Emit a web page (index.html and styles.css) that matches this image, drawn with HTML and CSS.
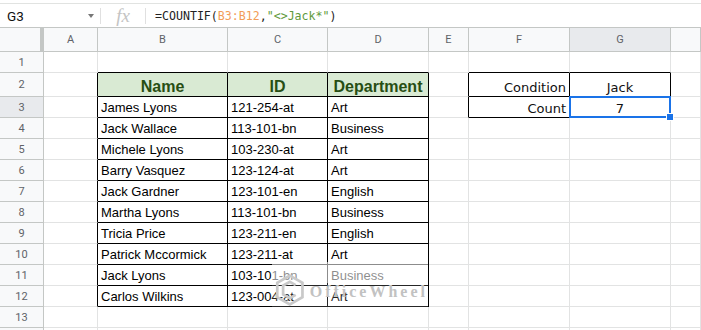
FILE: index.html
```html
<!DOCTYPE html>
<html lang="en">
<head>
  <meta charset="UTF-8" />
  <title>COUNTIF not equal</title>
  <link rel="stylesheet" href="styles.css">
</head>
<body>
  <div class="topline"></div>
  <!-- formula bar -->
  <div class="formula-bar">
    <div class="name-box"><span>G3</span><span class="caret"></span></div>
    <div class="sep"></div>
    <div class="fx">fx</div>
    <div class="sep"></div>
    <div class="formula">=COUNTIF(<span class="ref">B3:B12</span>,<span class="str">"&lt;&gt;Jack*"</span>)</div>
  </div>

  <div class="sheet-wrap">
    <div class="sheet">
      <!-- column headers -->
      <div class="corner"></div>
      <div class="col-head">A</div>
      <div class="col-head">B</div>
      <div class="col-head">C</div>
      <div class="col-head">D</div>
      <div class="col-head">E</div>
      <div class="col-head">F</div>
      <div class="col-head sel">G</div>
      <div class="col-head"></div>

      <div class="row-head">1</div>
      <div></div><div class="tb-top"></div><div class="tb-top"></div><div class="tb-top"></div>
      <div></div><div class="tb-top"></div><div class="tb-top"></div><div></div>

      <div class="row-head">2</div>
      <div class="tb-left"></div>
      <div class="tb hd">Name</div>
      <div class="tb hd">ID</div>
      <div class="tb hd">Department</div>
      <div class="tb-left"></div>
      <div class="tb dv r">Condition</div>
      <div class="tb dv c">Jack</div>
      <div></div>

      <div class="row-head sel">3</div>
      <div class="tb-left"></div>
      <div class="tb">James Lyons</div>
      <div class="tb">121-254-at</div>
      <div class="tb">Art</div>
      <div class="tb-left"></div>
      <div class="tb dv r">Count</div>
      <div class="tb dv c active">7</div>
      <div></div>

      <div class="row-head">4</div>
      <div class="tb-left"></div>
      <div class="tb">Jack Wallace</div>
      <div class="tb">113-101-bn</div>
      <div class="tb">Business</div>
      <div></div><div></div><div></div><div></div>

      <div class="row-head">5</div>
      <div class="tb-left"></div>
      <div class="tb">Michele Lyons</div>
      <div class="tb">103-230-at</div>
      <div class="tb">Art</div>
      <div></div><div></div><div></div><div></div>

      <div class="row-head">6</div>
      <div class="tb-left"></div>
      <div class="tb">Barry Vasquez</div>
      <div class="tb">123-124-at</div>
      <div class="tb">Art</div>
      <div></div><div></div><div></div><div></div>

      <div class="row-head">7</div>
      <div class="tb-left"></div>
      <div class="tb">Jack Gardner</div>
      <div class="tb">123-101-en</div>
      <div class="tb">English</div>
      <div></div><div></div><div></div><div></div>

      <div class="row-head">8</div>
      <div class="tb-left"></div>
      <div class="tb">Martha Lyons</div>
      <div class="tb">113-101-bn</div>
      <div class="tb">Business</div>
      <div></div><div></div><div></div><div></div>

      <div class="row-head">9</div>
      <div class="tb-left"></div>
      <div class="tb">Tricia Price</div>
      <div class="tb">123-211-en</div>
      <div class="tb">English</div>
      <div></div><div></div><div></div><div></div>

      <div class="row-head">10</div>
      <div class="tb-left"></div>
      <div class="tb">Patrick Mccormick</div>
      <div class="tb">123-211-at</div>
      <div class="tb">Art</div>
      <div></div><div></div><div></div><div></div>

      <div class="row-head">11</div>
      <div class="tb-left"></div>
      <div class="tb">Jack Lyons</div>
      <div class="tb">103-101-bn</div>
      <div class="tb">Business</div>
      <div></div><div></div><div></div><div></div>

      <div class="row-head">12</div>
      <div class="tb-left"></div>
      <div class="tb">Carlos Wilkins</div>
      <div class="tb">123-004-at</div>
      <div class="tb">Art</div>
      <div></div><div></div><div></div><div></div>

      <div class="row-head">13</div>
      <div></div><div></div><div></div><div></div><div></div><div></div><div></div><div></div>

      <div class="row-head"></div>
      <div></div><div></div><div></div><div></div><div></div><div></div><div></div><div></div>
    </div>

    <!-- watermark over the table -->
    <div class="watermark">
      <svg width="33" height="36" viewBox="0 0 33 36">
        <polygon points="16.5,2 30.5,10 30.5,26 16.5,34 2.5,26 2.5,10" fill="none" stroke="#c9c9c9" stroke-width="3"/>
        <polyline points="23,12.5 16.5,8.8 9,13 9,23 16.5,27.2 23,23.5" fill="none" stroke="#c9c9c9" stroke-width="3"/>
      </svg>
      <span>OfficeWheel</span>
    </div>
  </div>
</body>
</html>
```

FILE: styles.css
```css
body {
  margin: 0;
  background: #fff;
  font-family: "Liberation Sans", Arial, sans-serif;
  overflow: hidden;
}
.topline {
  height: 3px;
  border-bottom: 1px solid #e1e3e1;
}
.formula-bar {
  display: flex;
  align-items: center;
  height: 23px;
}
.name-box {
  width: 100px;
  box-sizing: border-box;
  padding: 0 6px 0 7px;
  display: flex;
  align-items: center;
  justify-content: space-between;
  font: 13.5px Roboto, sans-serif;
  color: #111;
}
.caret {
  border-left: 3.5px solid transparent;
  border-right: 3.5px solid transparent;
  border-top: 4px solid #777;
}
.sep {
  width: 1px;
  height: 16px;
  background: #e0e0e0;
}
.fx {
  width: 44px;
  text-align: center;
  font: italic 19px "Liberation Serif", serif;
  color: #c4c4c4;
}
.formula {
  padding-left: 9px;
  font: 11.6px "DejaVu Sans Mono", monospace;
  color: #222;
}
.ref { color: #f29d58; }
.str { color: #5f9a3c; }

.sheet-wrap {
  position: relative;
}
.sheet {
  border-top: 1px solid #c4c7c5;
  display: grid;
  grid-template-columns: 44px 54px 130px 100px 101px 40px 101px 101px 1fr;
  grid-template-rows: 24px 21px 24px repeat(12, 21px);
}
.sheet > div {
  box-sizing: border-box;
  border-right: 1px solid #e2e3e3;
  border-bottom: 1px solid #e2e3e3;
  display: flex;
  align-items: flex-end;
  padding: 0 3px 2px;
  font-size: 13px;
  color: #000;
  white-space: nowrap;
  overflow: hidden;
}
.sheet > .corner {
  background: #f8f9fa;
  border-right: 4px solid #c4c7c5;
  border-bottom-color: #c4c7c5;
}
.sheet > .col-head,
.sheet > .row-head {
  background: #f8f9fa;
  border-right-color: #c4c7c5;
  border-bottom-color: #c4c7c5;
  justify-content: center;
  align-items: center;
  padding: 0;
  font: 11px Roboto, sans-serif;
  color: #5f6368;
}
.sheet > .sel {
  background: #e8eaed;
}
.sheet > .tb-top { border-bottom-color: #000; }
.sheet > .tb-left { border-right-color: #000; }
.sheet > .tb {
  border-right-color: #000;
  border-bottom-color: #000;
}
.sheet > .hd {
  background: #d9ead3;
  color: #274e13;
  font-weight: bold;
  font-size: 16px;
  justify-content: center;
  padding-bottom: 0;
}
.sheet > .dv {
  font-family: "DejaVu Sans", Verdana, sans-serif;
  color: #111;
  padding-bottom: 1px;
}
.sheet > .r { justify-content: flex-end; }
.sheet > .c { justify-content: center; }
.sheet > .active {
  position: relative;
  overflow: visible;
}
.active::before {
  content: "";
  position: absolute;
  top: -1px;
  left: -1px;
  right: -1px;
  bottom: -1px;
  border: 2px solid #1a73e8;
  z-index: 2;
}
.active::after {
  content: "";
  position: absolute;
  right: -4px;
  bottom: -4px;
  width: 6px;
  height: 6px;
  background: #1a73e8;
  border: 1px solid #fff;
  z-index: 3;
}

.watermark {
  position: absolute;
  left: 272px;
  top: 235px;
  width: 156px;
  height: 46px;
  box-sizing: border-box;
  padding: 10px 0 0 3px;
  display: flex;
  align-items: center;
  gap: 5px;
  background: linear-gradient(rgba(255,255,255,.55) 0 45%, rgba(255,255,255,.15) 45%);
}
.watermark span {
  font: bold 16px "Liberation Serif", serif;
  letter-spacing: 3px;
  color: #c2c2c2;
  margin-top: 4px;
}
```
